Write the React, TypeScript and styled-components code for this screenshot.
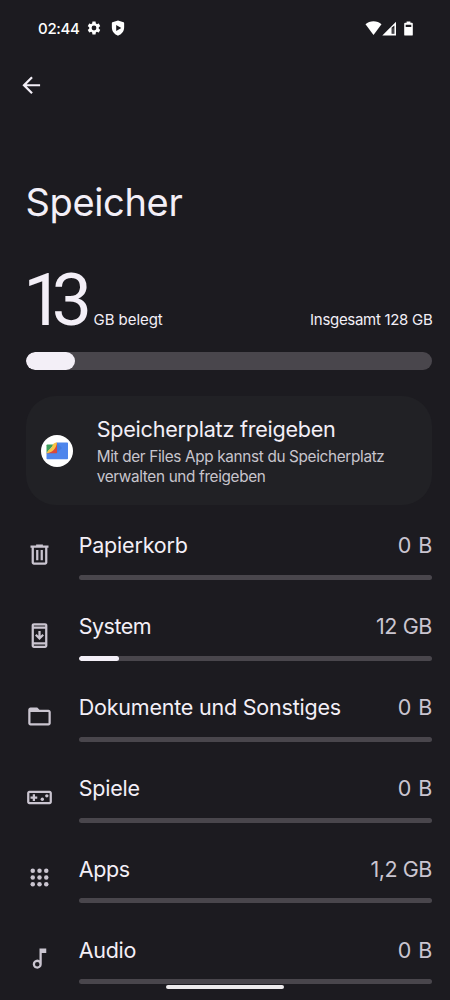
import React from 'react';
import styled, { createGlobalStyle } from 'styled-components';

const Global = createGlobalStyle`
  * { box-sizing: border-box; }
  body { margin: 0; background: #1c1b20; }
`;

const Screen = styled.main`
  position: relative;
  width: 450px;
  height: 1000px;
  overflow: hidden;
  background: #1c1b20;
  color: #f3eff7;
  font-family: Inter, 'Liberation Sans', sans-serif;
  font-weight: 400;
  white-space: nowrap;
`;

const StatusBar = styled.header`
  display: flex;
  align-items: center;
  justify-content: space-between;
  height: 56px;
  padding: 0 34.5px 0 38px;
  color: #fff;
`;

const StatusGroup = styled.div<{ $gap: number }>`
  display: flex;
  align-items: center;
  gap: ${p => p.$gap}px;
`;

const Clock = styled.span`
  width: 41px;
  margin-right: -2px;
  font-size: 15px;
  font-weight: 450;
  letter-spacing: -0.3px;
`;

const Icon = styled.svg<{ $size: number }>`
  display: block;
  flex: none;
  width: ${p => p.$size}px;
  height: ${p => p.$size}px;
  fill: currentColor;
`;

const ShieldIcon = styled(Icon)`
  margin-left: -1.5px;
`;

const BatteryIcon = styled(Icon)`
  margin-left: 3px;
`;

const BackButton = styled.button`
  display: block;
  margin: 16.2px 0 0 17.6px;
  padding: 0;
  border: 0;
  background: none;
  color: #f3eff7;
`;

const Title = styled.h1`
  margin: 80.3px 0 0 25.4px;
  font-size: 38px;
  font-weight: 400;
  line-height: 46px;
  letter-spacing: -0.33px;
`;

const Content = styled.section`
  padding: 34.3px 17.6px 0 26px;
`;

const Usage = styled.div`
  display: flex;
  align-items: baseline;
  height: 92.5px;
  font-size: 15px;
`;

const UsedNumber = styled.span`
  width: 68.3px;
  margin-left: -2.8px;
  font-family: Roboto, sans-serif;
  font-size: 71.5px;
  line-height: 84px;
  letter-spacing: -11.6px;
`;

const UsedUnit = styled.span`
  margin-left: 2px;
  letter-spacing: -0.05px;
`;

const Total = styled.span`
  margin-left: auto;
  letter-spacing: -0.3px;
`;

const Track = styled.div<{ $thick?: boolean }>`
  height: ${p => (p.$thick ? 18 : 5)}px;
  border-radius: 9px;
  overflow: hidden;
  background: #49464c;
`;

const Fill = styled.div<{ $width: number }>`
  width: ${p => p.$width}px;
  height: 100%;
  border-radius: 9px;
  background: #f3eff7;
`;

const Card = styled.article`
  display: flex;
  align-items: center;
  height: 109.5px;
  margin-top: 26px;
  padding-left: 15px;
  border-radius: 30px;
  background: #212125;
`;

const CardText = styled.div`
  margin: 0.6px 0 0 23.7px;
`;

const CardTitle = styled.h2`
  margin: 0 0 4px;
  font-size: 21.6px;
  font-weight: 400;
  line-height: 28px;
  letter-spacing: -0.25px;
`;

const CardLine = styled.div`
  font-size: 15.3px;
  line-height: 19.7px;
  letter-spacing: -0.33px;
  color: #c8c5cd;
`;

const List = styled.ul`
  margin: 25.9px 0 0;
  padding: 0;
  list-style: none;
`;

const Row = styled.li`
  display: flex;
  height: 80.9px;
  color: #cac5d0;
`;

const RowIcon = styled.div`
  width: 53px;
  padding-top: 9.7px;
`;

const RowBody = styled.div`
  flex: 1;
`;

const RowHead = styled.div`
  display: flex;
  justify-content: space-between;
  height: 43.7px;
  font-size: 21.5px;
  line-height: 28px;
`;

const Label = styled.span<{ $spacing: number }>`
  margin-left: -0.3px;
  color: #f3eff7;
  letter-spacing: ${p => p.$spacing}px;
`;

const Value = styled.span<{ $spacing: number }>`
  margin-right: ${p => -p.$spacing}px;
  letter-spacing: ${p => p.$spacing}px;
`;

const HomeHandle = styled.div`
  position: absolute;
  left: 166px;
  top: 984.6px;
  width: 118.4px;
  height: 4.4px;
  border-radius: 3px;
  background: #edebed;
`;

const TrashIcon = () => (
  <Icon $size={27} viewBox="0 0 24 24">
    <path fillRule="evenodd" d="M7 21q-.825 0-1.412-.587T5 19V6H4V4h5V3h6v1h5v2h-1v13q0 .825-.587 1.413T17 21zM17 6H7v13h10zM9 17h2V8H9zm4 0h2V8h-2z" />
  </Icon>
);

const SystemIcon = () => (
  <Icon $size={27} viewBox="0 0 24 24">
    <path fillRule="evenodd" d="M7 23q-.825 0-1.412-.587T5 21V3q0-.825.588-1.412T7 1h10q.825 0 1.413.588T19 3v18q0 .825-.587 1.413T17 23zM7 20v1h10v-1zM7 18h10V6H7zM7 4h10V3H7z" />
    <path d="m12 16-4-4 1.4-1.4 1.6 1.6V8h2v4.2l1.6-1.6L16 12z" />
  </Icon>
);

const FolderIcon = () => (
  <Icon $size={27} viewBox="0 0 24 24">
    <path d="M20 6h-8l-2-2H4c-1.1 0-2 .9-2 2v12c0 1.1.9 2 2 2h16c1.1 0 2-.9 2-2V8c0-1.1-.9-2-2-2zm0 12H4V8h16z" />
  </Icon>
);

const GameIcon = () => (
  <Icon $size={27} viewBox="0 0 24 24">
    <path d="M21 6H3c-1.1 0-2 .9-2 2v8c0 1.1.9 2 2 2h18c1.1 0 2-.9 2-2V8c0-1.1-.9-2-2-2zm0 10H3V8h18zM6 15h2v-2h2v-2H8V9H6v2H4v2h2z" />
    <circle cx="14.5" cy="13.5" r="1.5" />
    <circle cx="18.5" cy="10.5" r="1.5" />
  </Icon>
);

const AppsIcon = () => (
  <Icon $size={27} viewBox="0 0 24 24">
    {[6, 12, 18].map(y => [6, 12, 18].map(x => <circle key={`${x}-${y}`} cx={x} cy={y} r="2" />))}
  </Icon>
);

const NoteIcon = () => (
  <Icon $size={27} viewBox="0 0 24 24">
    <path d="M12 3v10.55A4 4 0 1 0 14 17V7h4V3zM10 19a2 2 0 1 1 0-4 2 2 0 0 1 0 4z" />
  </Icon>
);

const FilesIcon = () => (
  <Icon $size={32} viewBox="0 0 32 32">
    <circle cx="16" cy="16" r="16" fill="#fff" />
    <path d="M16 7.5h10.2a.8.8 0 0 1 .8.8v15.2a.8.8 0 0 1-.8.8H6.3a.8.8 0 0 1-.8-.8V18z" fill="#4f86ec" />
    <path d="M16 7.5l5 5.5-5.2 5.2H5.5z" fill="#3f74d6" opacity=".55" />
    <path d="M6.3 9.5H13l-7.500 8.500v-7.700a.8.8 0 0 1 .8-.8z" fill="#3c9e5b" />
    <path d="M16 7.5v10a.8.8 0 0 1-.8.8H5.5z" fill="#d9493c" />
    <path d="M16 7.5c-3 .2-4 1.3-4.6 3.2-.6 2-1.800 3.200-3.800 4.200L5.500 18.300c5.400-.7 9.600-3.800 10.500-10.800z" fill="#f7c445" />
  </Icon>
);

const categories = [
  { name: 'Papierkorb', spacing: -0.2, value: '0 B', valueSpacing: 0.5, used: 0, icon: <TrashIcon /> },
  { name: 'System', spacing: -0.5, value: '12 GB', valueSpacing: -0.4, used: 40, icon: <SystemIcon /> },
  { name: 'Dokumente und Sonstiges', spacing: -0.21, value: '0 B', valueSpacing: 0.5, used: 0, icon: <FolderIcon /> },
  { name: 'Spiele', spacing: -0.2, value: '0 B', valueSpacing: 0.5, used: 0, icon: <GameIcon /> },
  { name: 'Apps', spacing: -0.4, value: '1,2 GB', valueSpacing: -0.45, used: 0, icon: <AppsIcon /> },
  { name: 'Audio', spacing: -0.3, value: '0 B', valueSpacing: 0.5, used: 0, icon: <NoteIcon /> },
];

export default function App() {
  return (
    <Screen>
      <Global />
      <StatusBar>
        <StatusGroup $gap={8.5}>
          <Clock>02:44</Clock>
          <Icon $size={16} viewBox="0 0 24 24">
            <path d="M19.14 12.94c.04-.3.06-.61.06-.94 0-.32-.02-.64-.07-.94l2.03-1.58c.18-.14.23-.41.12-.61l-1.92-3.32c-.12-.22-.37-.29-.59-.22l-2.39.96c-.5-.38-1.03-.7-1.62-.94l-.36-2.54c-.04-.24-.24-.41-.48-.41h-3.84c-.24 0-.43.17-.47.41l-.36 2.54c-.59.24-1.13.57-1.62.94l-2.39-.96c-.22-.08-.47 0-.59.22L2.74 8.87c-.12.21-.08.47.12.61l2.03 1.58c-.05.3-.09.63-.09.94s.02.64.07.94l-2.03 1.58c-.18.14-.23.41-.12.61l1.92 3.32c.12.22.37.29.59.22l2.39-.96c.5.38 1.03.7 1.62.94l.36 2.54c.05.24.24.41.48.41h3.84c.24 0 .44-.17.47-.41l.36-2.54c.59-.24 1.13-.56 1.62-.94l2.39.96c.22.08.47 0 .59-.22l1.92-3.32c.12-.22.07-.47-.12-.61zM12 15.6a3.6 3.6 0 1 1 0-7.2 3.6 3.6 0 0 1 0 7.2z" />
          </Icon>
          <ShieldIcon $size={18} viewBox="0 0 24 24">
            <path fillRule="evenodd" d="M12 1.9 4.600 4.300Q3.800 4.600 3.800 5.500V11c0 5.500 3.600 9.600 8.200 11.200 4.600-1.600 8.200-5.700 8.200-11.200V5.500q0-.9-.8-1.200zM9.600 7.900l6.800 4.100-6.800 4.100z" />
          </ShieldIcon>
        </StatusGroup>
        <StatusGroup $gap={0.5}>
          <Icon $size={17} viewBox="0 0 17 17">
            <path d="M.5 4.2C4.600.2 12.400.2 16.500 4.200L8.500 15z" />
          </Icon>
          <Icon $size={15} viewBox="0 0 15 15">
            <path fillRule="evenodd" d="M14 .8V14.5H.3zM9.600 6.700v6.100h2.800V4.600z" />
            <path d="M10.300 7.300h1.500v5.200h-1.500z" opacity=".25" />
          </Icon>
          <BatteryIcon $size={15} viewBox="0 0 15 15">
            <path fillRule="evenodd" d="M5.600.5h3.800v1.300h1.500q.9 0 .9.900v11q0 .9-.9.900H4.100q-.9 0-.9-.9v-11q0-.9.900-.9h1.500zM4.700 3.700v2.400h5.600V3.700z" />
          </BatteryIcon>
        </StatusGroup>
      </StatusBar>
      <BackButton aria-label="Zurück">
        <Icon $size={26.5} viewBox="0 0 24 24">
          <path d="m7.825 13 5.600 5.600L12 20l-8-8 8-8 1.425 1.400-5.600 5.600H20v2z" />
        </Icon>
      </BackButton>
      <Title>Speicher</Title>
      <Content>
        <Usage>
          <UsedNumber>13</UsedNumber>
          <UsedUnit>GB belegt</UsedUnit>
          <Total>Insgesamt 128 GB</Total>
        </Usage>
        <Track $thick>
          <Fill $width={49} />
        </Track>
        <Card>
          <FilesIcon />
          <CardText>
            <CardTitle>Speicherplatz freigeben</CardTitle>
            <CardLine>Mit der Files App kannst du Speicherplatz</CardLine>
            <CardLine>verwalten und freigeben</CardLine>
          </CardText>
        </Card>
        <List>
          {categories.map(c => (
            <Row key={c.name}>
              <RowIcon>{c.icon}</RowIcon>
              <RowBody>
                <RowHead>
                  <Label $spacing={c.spacing}>{c.name}</Label>
                  <Value $spacing={c.valueSpacing}>{c.value}</Value>
                </RowHead>
                <Track>
                  <Fill $width={c.used} />
                </Track>
              </RowBody>
            </Row>
          ))}
        </List>
      </Content>
      <HomeHandle />
    </Screen>
  );
}
